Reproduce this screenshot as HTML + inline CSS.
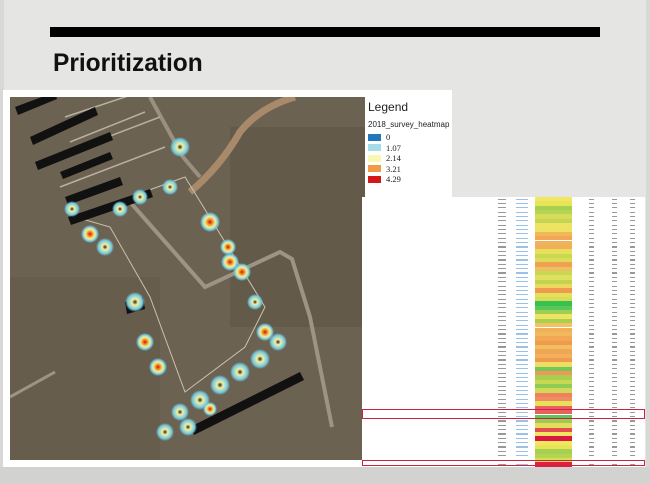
<!DOCTYPE html>
<html><head><meta charset="utf-8"><style>
body{margin:0;width:650px;height:484px;overflow:hidden;background:#e5e5e3;font-family:"Liberation Sans",sans-serif;position:relative}
.bar{position:absolute;left:50px;top:27px;width:550px;height:10px;background:#000}
h1{position:absolute;left:53px;top:49px;margin:0;font-size:25px;font-weight:bold;color:#111;letter-spacing:0px;transform:scaleX(0.98);transform-origin:left}
.frame{position:absolute;left:3px;top:90px;width:449px;height:377px;background:#fff}
.bottom{position:absolute;left:0;top:467px;width:650px;height:17px;background:#d2d2d0}
.leg{position:absolute;left:368px;top:100px;font-size:10px;color:#222}
.leg .t{font-size:12px;margin-bottom:6px}
.leg .s{font-size:8px;margin-bottom:3px}
.leg .r{display:flex;align-items:center;height:10.5px;font-size:8.5px;font-family:"Liberation Serif",serif}
.leg .r i{display:inline-block;width:13px;height:7px;margin-right:5px}
.tab{position:absolute;left:362px;top:197px;width:283px;height:270px;background:#fff;overflow:hidden}
.row{position:absolute;left:0;width:283px;height:4.35px}
.row b{position:absolute;left:173px;width:37px;height:100%}
.row u{position:absolute;left:154px;top:1.5px;width:12px;height:1.2px;background:#9cc0e6}
.row s{position:absolute;left:136px;top:1.5px;width:8px;height:1.2px;background:#999}
.row em{position:absolute;top:1.5px;height:1.2px;width:5px;background:#999}
</style></head><body>
<div style="position:absolute;left:0;top:0;width:4px;height:484px;background:#d8d8d6"></div>
<div style="position:absolute;right:0;top:0;width:4px;height:484px;background:#d8d8d6"></div>
<div class="bar"></div>
<h1>Prioritization</h1>
<div class="frame"></div>
<svg style="position:absolute;left:10px;top:97px" width="355" height="363" viewBox="0 0 355 363">
<defs>
<radialGradient id="h"><stop offset="0" stop-color="#d01010"/><stop offset=".3" stop-color="#f0a030"/><stop offset=".55" stop-color="#f4f0a0"/><stop offset=".8" stop-color="#70c8e0"/><stop offset="1" stop-color="#70c8e0" stop-opacity="0"/></radialGradient>
<radialGradient id="h2"><stop offset="0" stop-color="#222"/><stop offset=".3" stop-color="#f4f0a0"/><stop offset=".75" stop-color="#70c8e0"/><stop offset="1" stop-color="#70c8e0" stop-opacity="0"/></radialGradient>
</defs>
<rect width="355" height="363" fill="#6c6252"/>
<rect x="0" y="180" width="150" height="183" fill="#675d4d"/>
<rect x="220" y="30" width="135" height="200" fill="#645a4a"/>
<path d="M180 95 Q210 70 230 35 Q250 10 285 0" stroke="#a8896a" stroke-width="7" fill="none"/>
<path d="M140 0 L173 60 L190 80" stroke="#9a9080" stroke-width="4" fill="none"/>
<path d="M120 105 L195 190 L270 155 L282 162 L300 220 L322 330" stroke="#9c9484" stroke-width="4" fill="none"/>
<path d="M0 300 L45 275" stroke="#9c9484" stroke-width="3" fill="none"/>
<path d="M65 120 L175 80 L255 210 L235 250 L175 295 L140 200 L100 130 Z" fill="none" stroke="#c8c0b0" stroke-width="1"/>
<path d="M55 20 L130 -5 M60 45 L135 15 M45 60 L150 20 M50 90 L155 50" stroke="#b8b0a0" stroke-width="1.5" fill="none"/>
<g fill="#111">
<polygon points="5,10 45,-5 47,2 8,18"/><polygon points="20,40 85,10 88,18 23,48"/><polygon points="25,65 100,35 103,43 28,73"/>
<polygon points="50,75 100,55 103,62 53,82"/><polygon points="55,100 110,80 113,88 58,108"/>
<polygon points="58,120 140,92 143,100 61,128"/>
<polygon points="180,330 290,275 294,283 184,338"/>
<polygon points="115,205 133,200 135,212 117,217"/>
</g>
<g>
<circle cx="170" cy="50" r="10" fill="url(#h2)"/><circle cx="160" cy="90" r="8" fill="url(#h2)"/>
<circle cx="62" cy="112" r="8" fill="url(#h2)"/><circle cx="80" cy="137" r="9" fill="url(#h)"/>
<circle cx="95" cy="150" r="9" fill="url(#h2)"/><circle cx="125" cy="205" r="10" fill="url(#h2)"/>
<circle cx="200" cy="125" r="10" fill="url(#h)"/><circle cx="218" cy="150" r="8" fill="url(#h)"/>
<circle cx="220" cy="165" r="9" fill="url(#h)"/><circle cx="232" cy="175" r="9" fill="url(#h)"/>
<circle cx="245" cy="205" r="8" fill="url(#h2)"/><circle cx="135" cy="245" r="9" fill="url(#h)"/>
<circle cx="148" cy="270" r="9" fill="url(#h)"/><circle cx="255" cy="235" r="9" fill="url(#h)"/>
<circle cx="268" cy="245" r="9" fill="url(#h2)"/><circle cx="250" cy="262" r="10" fill="url(#h2)"/>
<circle cx="230" cy="275" r="10" fill="url(#h2)"/><circle cx="210" cy="288" r="10" fill="url(#h2)"/>
<circle cx="190" cy="303" r="10" fill="url(#h2)"/><circle cx="200" cy="312" r="7" fill="url(#h)"/>
<circle cx="170" cy="315" r="9" fill="url(#h2)"/><circle cx="178" cy="330" r="9" fill="url(#h2)"/>
<circle cx="155" cy="335" r="9" fill="url(#h2)"/><circle cx="110" cy="112" r="8" fill="url(#h2)"/>
<circle cx="130" cy="100" r="8" fill="url(#h2)"/>
</g>
</svg>
<div class="leg"><div class="t">Legend</div><div class="s">2018_survey_heatmap</div>
<div class="r"><i style="background:#2277bb"></i>0</div>
<div class="r"><i style="background:#a6dbe8"></i>1.07</div>
<div class="r"><i style="background:#f8f8b0"></i>2.14</div>
<div class="r"><i style="background:#f29a48"></i>3.21</div>
<div class="r"><i style="background:#d41818"></i>4.29</div></div>
<div style="position:absolute;left:367px;top:429px;font-size:7.5px;color:#222;word-spacing:3px">5 &nbsp;0 &nbsp;5 &nbsp;10 15 20 m</div>
<div style="position:absolute;left:370px;top:441px;width:66px;height:6px;border:1px solid #111;background:linear-gradient(90deg,#111 0 11%,#fff 11% 20%,#111 20% 40%,#fff 40% 60%,#111 60% 80%,#fff 80%)"></div>
<div class="tab" id="t"></div>
<div class="bottom"></div>
<script>
var c=["#f2e860","#e8e458","#a8d050","#b4d454","#d8dc58","#c4d454","#eee462","#ece264","#f2b858","#f0a858","#f2b25a","#f0b05a","#e8e05a","#c8d850","#dcdc58","#f0a050","#ecc060","#c8d850","#e0e060","#c0d450","#ecd85e","#f09a50","#e4e05a","#d8dc56","#38c050","#58c858","#9cd054","#eee462","#a8d050","#f4c260","#f0b058","#f2b85c","#f2a852","#f09a50","#f0c060","#f0a656","#f2b058","#f09a50","#eedd60","#70c858","#f0985a","#a8d050","#c8d850","#90cc54","#d0da58","#f08060","#f08c62","#e8e05a","#d0da56","#b8d450","#60c45a","#98cc56","#e4dc5a","#e05050","#f2e462","#d81840"];
var h="";for(var i=0;i<62;i++){var col=c[i%c.length];if(i==48||i==49)col="#e86060";if(i==61)col="#e02040";var y=i*4.35;h+='<div class="row" style="top:'+y+'px"><s></s><u></u><b style="background:'+col+'"></b><em style="left:227px"></em><em style="left:250px"></em><em style="left:268px"></em></div>';}
h+='<div style="position:absolute;left:0;top:212px;width:281px;height:8px;border:1px solid #d02040"></div><div style="position:absolute;left:0;top:263px;width:281px;height:4px;border:1px solid #d02040"></div>';
document.getElementById("t").innerHTML=h;
</script>
</body></html>
